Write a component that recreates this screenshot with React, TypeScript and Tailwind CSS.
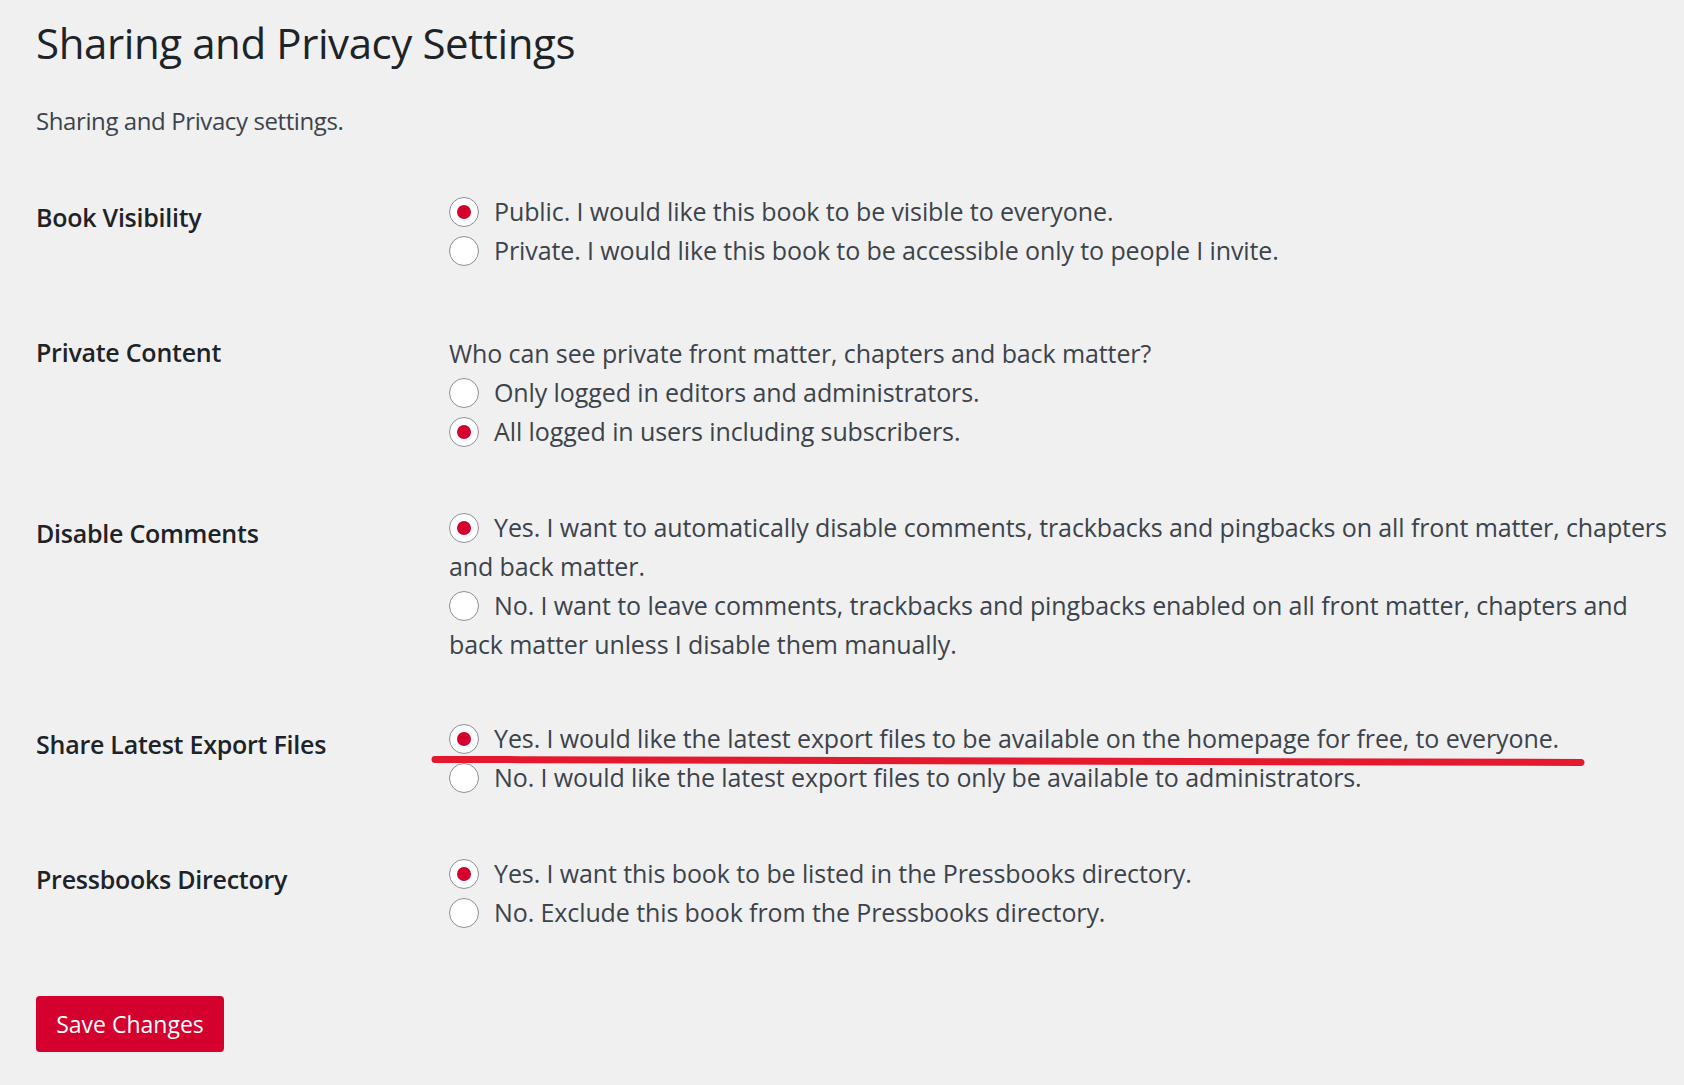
import React from "react";

function Radio({ checked }: { checked?: boolean }) {
  return (
    <span className="relative inline-block w-[30px] h-[30px] rounded-full border border-[#8c8f94] bg-white align-[-5.5px] mr-[15px]">
      {checked && (
        <span className="absolute left-[7px] top-[7px] w-[14px] h-[14px] rounded-full bg-[#d4002d]" />
      )}
    </span>
  );
}

function Label({ children }: { children: React.ReactNode }) {
  return (
    <div className="w-[413px] shrink-0 pt-[6px] text-[25px] leading-[39px] font-semibold text-[#1d2327] tracking-[-0.25px]">
      {children}
    </div>
  );
}

const body = "text-[25px] leading-[39px] text-[#3c434a] tracking-[-0.1px] whitespace-nowrap";

export default function App() {
  return (
    <div className="min-h-screen w-full bg-[#f0f0f1] pl-[36px] pr-[10px] pt-[15px] pb-[33px] font-['Open_Sans',sans-serif]">
      <h1 className="text-[42px] leading-[56px] tracking-[-0.4px] text-[#1d2327] font-normal">
        Sharing and Privacy Settings
      </h1>
      <p className="mt-[30px] text-[24px] leading-[39px] tracking-[-0.4px] text-[#3c434a]">
        Sharing and Privacy settings.
      </p>

      <div className="mt-[52px] flex flex-col">
        <div className="flex">
          <Label>Book Visibility</Label>
          <div className={body}>
            <div>
              <Radio checked />
              Public. I would like this book to be visible to everyone.
            </div>
            <div>
              <Radio />
              Private. I would like this book to be accessible only to people I invite.
            </div>
          </div>
        </div>

        <div className="flex mt-[57px]">
          <Label>Private Content</Label>
          <div className={body + " pt-[7px]"}>
            <div>Who can see private front matter, chapters and back matter?</div>
            <div>
              <Radio />
              Only logged in editors and administrators.
            </div>
            <div>
              <Radio checked />
              All logged in users including subscribers.
            </div>
          </div>
        </div>

        <div className="flex mt-[57px]">
          <Label>Disable Comments</Label>
          <div className={body + " leading-[38.5px]"}>
            <div>
              <Radio checked />
              Yes. I want to automatically disable comments, trackbacks and pingbacks on all front matter, chapters
              <br />
              and back matter.
            </div>
            <div>
              <Radio />
              No. I want to leave comments, trackbacks and pingbacks enabled on all front matter, chapters and
              <br />
              back matter unless I disable them manually.
            </div>
          </div>
        </div>

        <div className="flex mt-[55px]">
          <Label>Share Latest Export Files</Label>
          <div className={body + " relative"}>
            <div>
              <Radio checked />
              Yes. I would like the latest export files to be available on the homepage for free, to everyone.
            </div>
            <div>
              <Radio />
              No. I would like the latest export files to only be available to administrators.
            </div>
            <svg
              className="absolute left-[-18px] top-[34px] pointer-events-none"
              width="1156"
              height="16"
              viewBox="0 0 1156 16"
            >
              <path d="M4 6.5 C 400 7, 800 8.5, 1150 9.5" stroke="#e5192e" strokeWidth="7" strokeLinecap="round" fill="none" />
            </svg>
          </div>
        </div>

        <div className="flex mt-[57px]">
          <Label>Pressbooks Directory</Label>
          <div className={body}>
            <div>
              <Radio checked />
              Yes. I want this book to be listed in the Pressbooks directory.
            </div>
            <div>
              <Radio />
              No. Exclude this book from the Pressbooks directory.
            </div>
          </div>
        </div>
      </div>

      <button className="mt-[64px] h-[56px] w-[188px] rounded-[4px] bg-[#d4002d] text-white text-[23px] block">
        Save Changes
      </button>
    </div>
  );
}
